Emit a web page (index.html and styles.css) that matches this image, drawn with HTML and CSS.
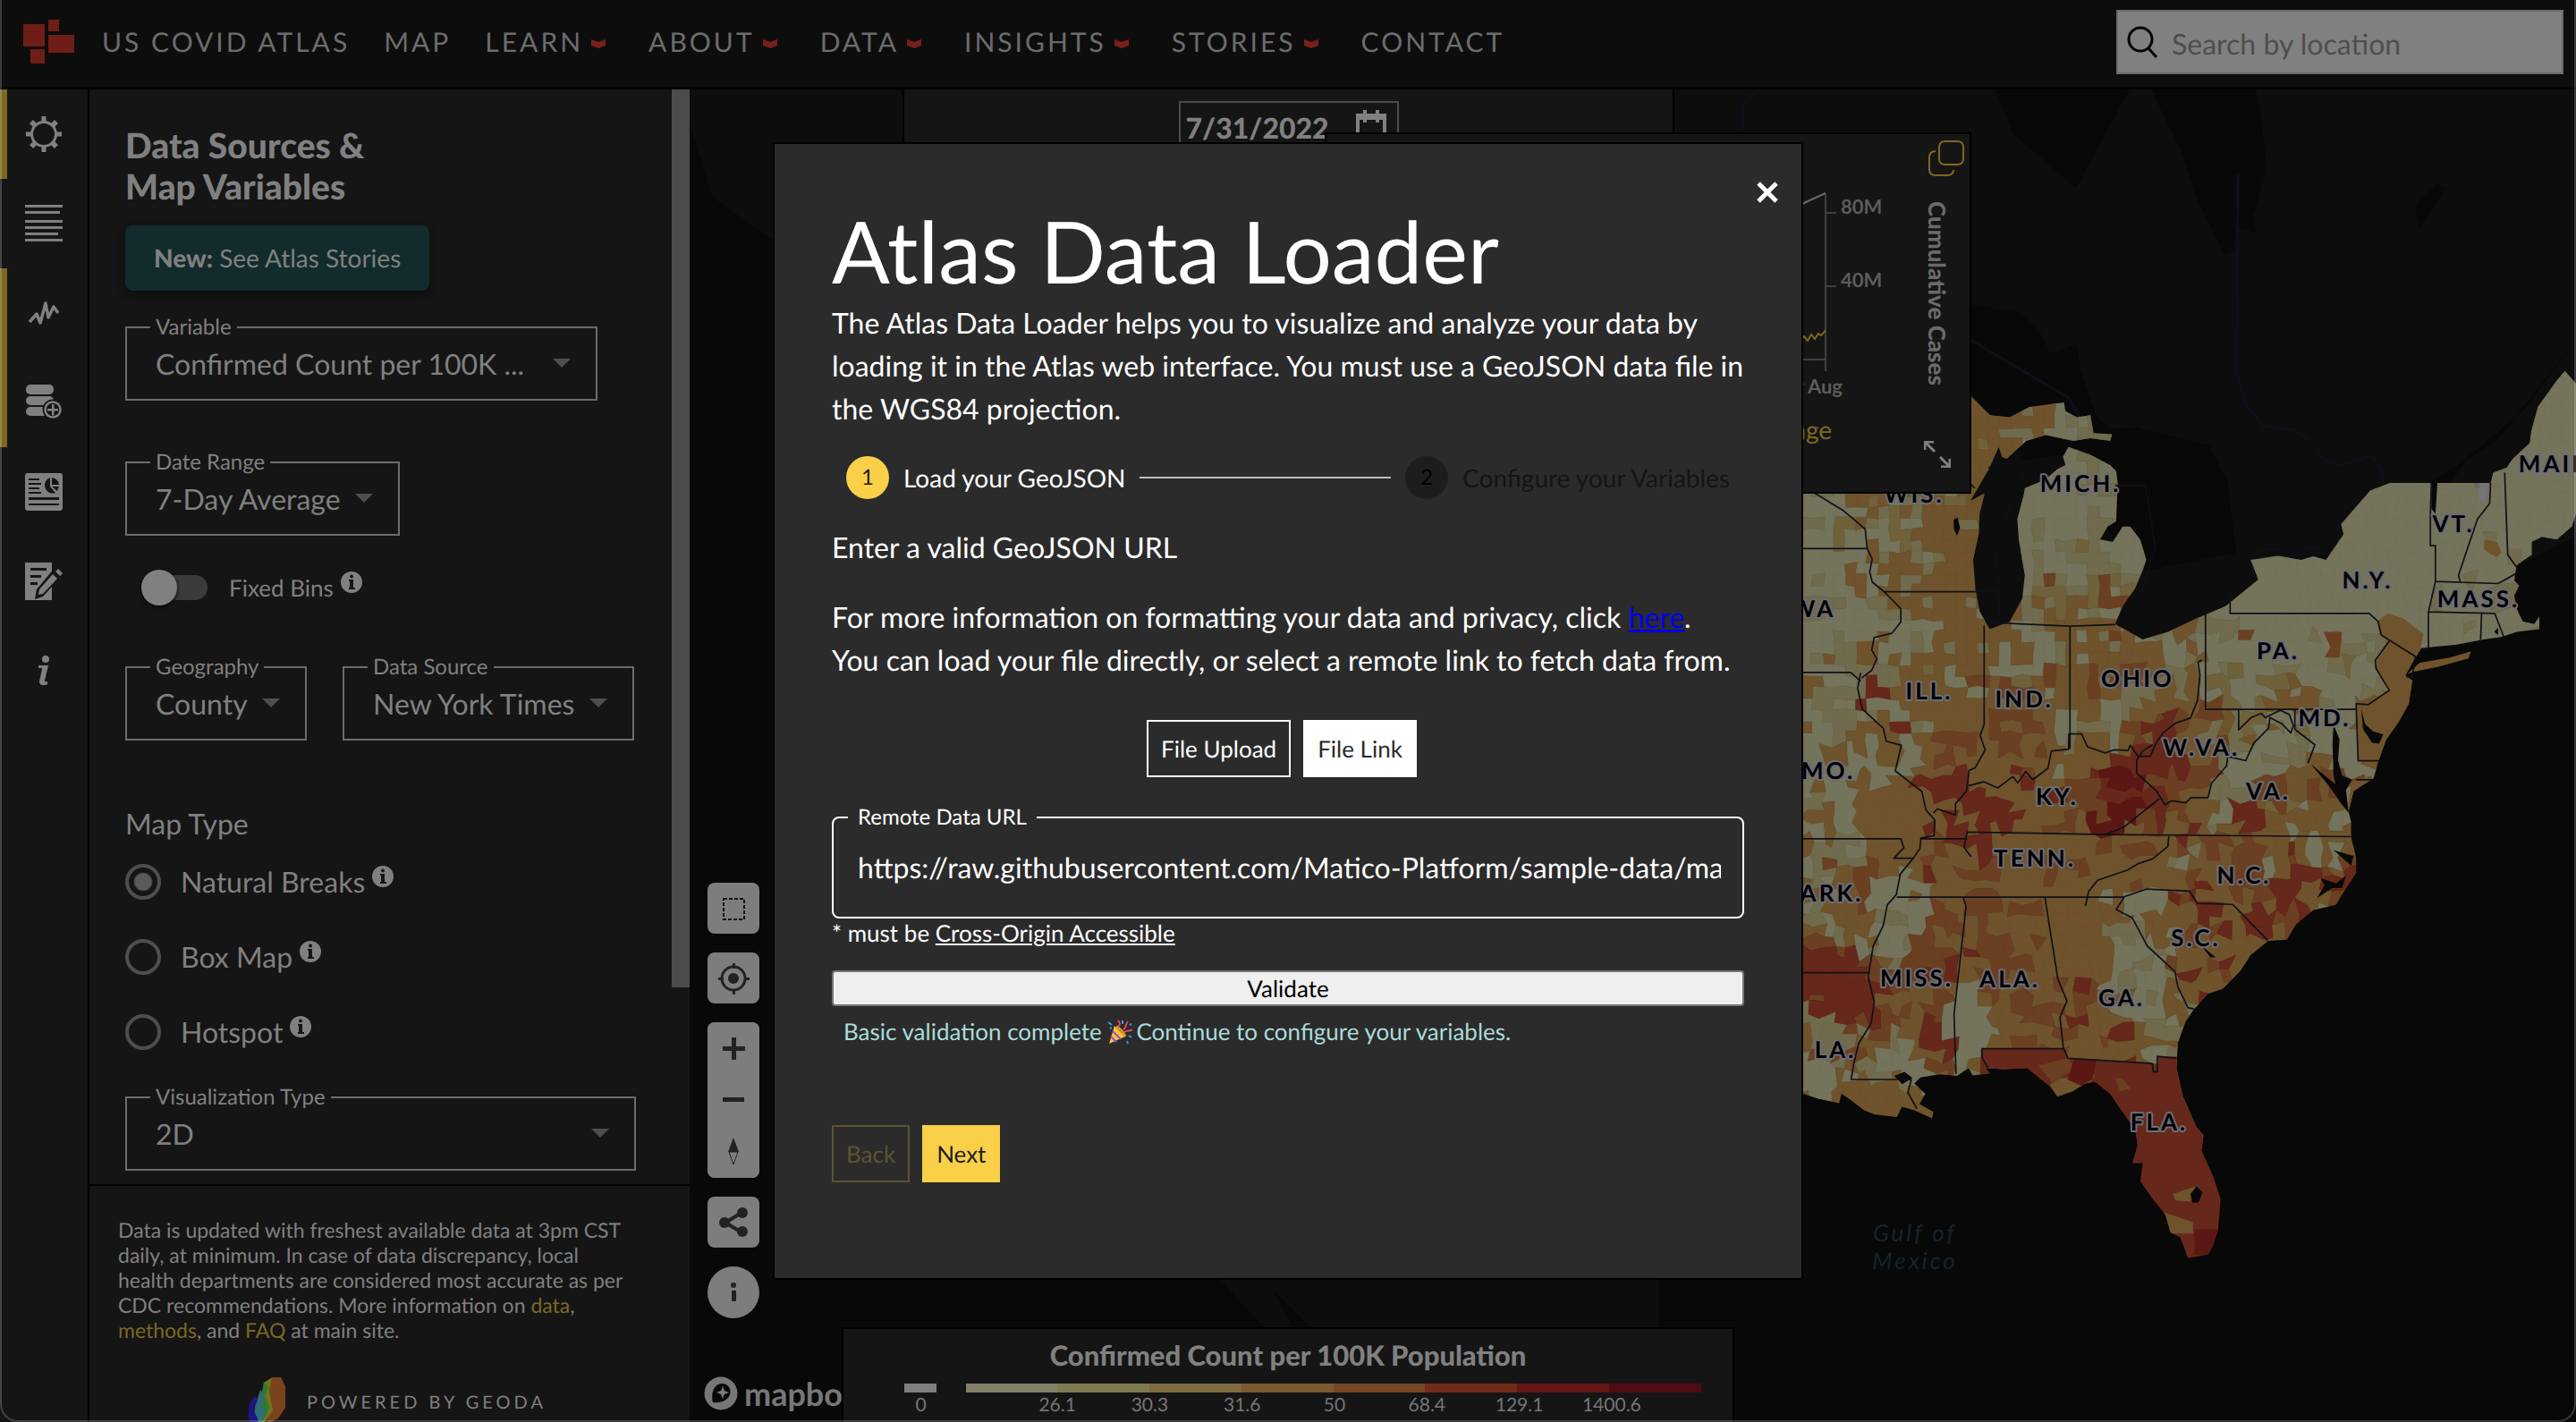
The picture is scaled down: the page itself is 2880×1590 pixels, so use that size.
FILE: index.html
```html
<!DOCTYPE html>
<html lang="en">
<head>
<meta charset="utf-8">
<title>US Covid Atlas</title>
<link rel="stylesheet" href="styles.css">
</head>
<body>
<svg width="0" height="0" class="defs" aria-hidden="true">
  <symbol id="caret" viewBox="0 0 16 10"><path d="M0 0l8 3 8-3v7l-8 3-8-3z"/></symbol>
  <symbol id="info" viewBox="0 0 24 24"><circle cx="12" cy="12" r="12"/><path d="M9 9h5v9h2v2H9v-2h1v-7H9zM12 3.500a2 2 0 1 1 0 4 2 2 0 0 1 0-4z" fill="#151515"/></symbol>
</svg>

<header class="topbar">
  <nav class="nav">
    <a class="brand" href="#">
      <svg class="logo" viewBox="0 0 58 50"><path d="M0 5h24v25H0zM28 0h12v13H28zM28 17h29v20H28zM8 33h16v16H8z"/></svg>
      <span>US COVID ATLAS</span>
    </a>
    <a href="#">MAP</a>
    <button type="button">LEARN<svg class="caret"><use href="#caret"/></svg></button>
    <button type="button">ABOUT<svg class="caret"><use href="#caret"/></svg></button>
    <button type="button">DATA<svg class="caret"><use href="#caret"/></svg></button>
    <button type="button">INSIGHTS<svg class="caret"><use href="#caret"/></svg></button>
    <button type="button">STORIES<svg class="caret"><use href="#caret"/></svg></button>
    <a href="#">CONTACT</a>
  </nav>
  <label class="search">
    <svg viewBox="0 0 36 36"><circle cx="15" cy="15" r="13"/><path d="M24 25l9 10"/></svg>
    <input type="search" placeholder="Search by location" aria-label="Search by location">
  </label>
</header>

<div class="workspace">
  <aside class="rail">
    <button type="button" class="on" aria-label="Settings"><svg viewBox="0 0 42 42"><circle cx="21" cy="21" r="13.500" fill="none" stroke="#808080" stroke-width="3"/><path d="M18.500 1h5v6h-5zM18.500 35h5v6h-5zM1 18.500h6v5H1zM35 18.500h6v5h-6zM5 9l4-4 5 5-4 4zM28 10l5-5 4 4-5 5zM5 33l5-5 4 4-5 5zM28 32l4-4 5 5-4 4z"/></svg></button>
    <button type="button" aria-label="Data table"><svg viewBox="0 0 42 42"><path d="M0 0h42v3H0zM0 7h39v3H0zM0 17h42v3H0zM0 24h42v3H0zM0 31h37v3H0zM0 38h42v3H0z"/></svg></button>
    <button type="button" class="on" aria-label="Chart"><svg viewBox="0 0 42 42"><path d="M5 31l8-9 4 10 6-22 3 16 6-12 5 7" fill="none" stroke="#808080" stroke-width="3.500" stroke-linejoin="round"/></svg></button>
    <button type="button" class="on" aria-label="Add data"><svg viewBox="0 0 42 42"><rect x="1" y="1" width="31" height="11" rx="5"/><rect x="1" y="14" width="31" height="10" rx="5"/><rect x="1" y="26" width="29" height="10" rx="5"/><circle cx="31" cy="29" r="11.500" fill="#151515"/><circle cx="31" cy="29" r="8.500" fill="none" stroke="#808080" stroke-width="2.500"/><path d="M30 23h2.500v5H37v2.500h-4.500v5H30v-5h-5V28h5z"/></svg></button>
    <button type="button" aria-label="Report"><svg viewBox="0 0 42 42"><rect width="42" height="42" rx="3"/><path d="M4 6h12v2H4zM4 11h14v2H4zM4 16h12v2H4zM4 21h14v2H4zM4 27h34v3H4zM4 34h34v2H4zM28 5v10l6 7a9 9 0 1 1-6-17zM30 5a9 9 0 0 1 8 8h-8zM30 15h8l-2 5z" fill="#151515"/></svg></button>
    <button type="button" aria-label="Edit notes"><svg viewBox="0 0 42 42"><path d="M0 0h30v42H0z"/><path d="M6 6h18v3H6zM6 14h12v3H6zM6 22h8v3H6zM33 6l9 8-22 24-9 3 2-11z" fill="#151515"/><path d="M31 13l5 5-16 17-5 1 1-6zM34 10l3-3 5 5-3 3z"/></svg></button>
    <button type="button" aria-label="About"><svg viewBox="0 0 42 42"><circle cx="23" cy="8" r="4"/><path d="M15 15h11l-4 17c0 2 2 1 3 1v3c-4 2-9 2-9-3l3-14c0-2-2-1-4-1z"/></svg></button>
  </aside>

  <section class="panel">
    <div class="panel-scroll">
      <form class="controls">
        <h2>Data Sources &amp;<br>Map Variables</h2>
        <a class="stories" href="#"><b>New:</b> See Atlas Stories</a>
        <fieldset class="field wide"><legend><label for="variable">Variable</label></legend>
          <div class="pick"><select id="variable"><option>Confirmed Count per 100K ...</option></select></div></fieldset>
        <fieldset class="field range"><legend><label for="range">Date Range</label></legend>
          <div class="pick"><select id="range"><option>7-Day Average</option></select></div></fieldset>
        <label class="toggle"><input type="checkbox"><span>Fixed Bins</span><svg class="info"><use href="#info"/></svg></label>
        <div class="pair">
          <fieldset class="field"><legend><label for="geo">Geography</label></legend>
            <div class="pick"><select id="geo"><option>County</option></select></div></fieldset>
          <fieldset class="field"><legend><label for="source">Data Source</label></legend>
            <div class="pick"><select id="source"><option>New York Times</option></select></div></fieldset>
        </div>
        <h3>Map Type</h3>
        <div class="radios">
          <label><input type="radio" name="type" checked><span>Natural Breaks</span><svg class="info"><use href="#info"/></svg></label>
          <label><input type="radio" name="type"><span>Box Map</span><svg class="info"><use href="#info"/></svg></label>
          <label><input type="radio" name="type"><span>Hotspot</span><svg class="info"><use href="#info"/></svg></label>
        </div>
        <fieldset class="field full"><legend><label for="viz">Visualization Type</label></legend>
          <div class="pick"><select id="viz"><option>2D</option></select></div></fieldset>
      </form>
      <div class="scrollbar"></div>
    </div>
    <footer class="note">
      <p>Data is updated with freshest available data at 3pm CST daily, at minimum. In case of data discrepancy, local health departments are considered most accurate as per CDC recommendations. More information on <a href="#">data</a>, <a href="#">methods</a>, and <a href="#">FAQ</a> at main site.</p>
      <div class="powered">
        <svg viewBox="0 0 42 56"><path d="M18 6l9-6h10l5 10v24l-8 12-12 6z" fill="#7a431c"/><path d="M18 6l9-5-3 14 2 12 2 10-8 12-8 4 2-16z" fill="#6f7420"/><path d="M18 6l5 4-4 12 5 12-9 18-7 2z" fill="#2f7a30"/><path d="M14 14l4 6-2 12 4 8-8 14-6 1 2-22z" fill="#2f6d78"/><path d="M8 20l3 6-5 10 5 10 2 10H6L0 44l2-14z" fill="#1d1580"/></svg>
        <span>POWERED BY GEODA</span>
      </div>
    </footer>
  </section>

  <main class="map">
    <svg class="canvas" viewBox="771 100 2109 1490" preserveAspectRatio="xMidYMid slice">
      <path class="land" d="M771 100h1460l20 50 70 60 60-110h499v500l-600 300H1800V550H771z"/>
      <path class="water" d="M2405 100l22 45 10 20 20 60 30 60 10-5 5-25 20 5-3-20 15-50-6-60-6-30zM771 140l25 80 70 50v300h-95zM2200 340l60 10 20 20 12 25 30-10 4 30 18 50 20 20-40 20-60 10-64-80zM2330 480l60-2 80 20 20 40 10 80-100 20-60-60z"/>
      <path class="land" d="M1363 1430l50 54h33l-30-54zM1410 1430l55 54h92l-40-54zM1517 1430h338v54h-298z"/>
      <path class="lakeline" d="M1948 145v-28l18-17M2203 380l110 65 12 22M2502 195l-2 220 10 35 20 26 35 5 22 15 10 17 20 8 35-12 15 25"/>
      <path class="water" d="M2880 380l-60 80-60 50-20 30-50 15 100-60zM2700 230l25-25 10 5-30 45z"/>
      <g transform="translate(2000 540) scale(.5612 .574)">
        <clipPath id="coast"><path d="M0 1185L28 1190 60 1200 100 1208 105 1190 120 1200 150 1222 170 1230 215 1235 225 1215 250 1222 285 1238 288 1225 260 1210 272 1190 250 1170 262 1158 300 1152 335 1155 358 1140 366 1154 400 1150 390 1140 430 1142 475 1140 500 1160 520 1175 535 1195 565 1185 590 1170 610 1166 640 1190 665 1225 690 1260 695 1290 684 1325 705 1325 700 1360 725 1395 750 1425 760 1460 780 1470 795 1510 835 1503 845 1485 855 1455 860 1395 845 1350 822 1300 826 1270 812 1255 785 1195 772 1140 775 1090 790 1050 805 1028 835 995 865 985 900 950 920 920 955 892 992 890 1010 860 1045 832 1090 822 1100 805 1130 760 1130 730 1120 690 1120 660 1115 640 1125 600 1165 575 1175 540 1190 500 1215 465 1235 430 1242 385 1228 375 1248 340 1260 322 1275 320 1330 315 1385 305 1420 300 1450 290 1495 285 1495 260 1485 275 1462 270 1450 245 1445 220 1455 200 1445 190 1450 160 1480 140 1480 115 1500 105 1530 110 1560 85 1568 60V-194L1546-218 1530-200 1492-148 1479-101 1476-78 1442-47 1430-30 1403-20 1398 0H1197L1158 15 1100 80 1105 100 1070 150 1045 143 1020 150 975 142 920 150 935 188 870 240 810 265 755 290 705 305 650 275 665 240 690 205 705 170 712 150 700 110 680 85 665 85 645 115 620 110 635 85 652 75 655 0 652-23 640-35 601-55 557-70 546-51 551-35 535-27 512-8 495 0 470 10 468 23 455 70 458 110 470 180 465 225 440 270 400 285 380 250 372 210 367 150 378 100 380 60 390 20 362 35 400-30 418-70 425-50 434-47 473-82 512-93 566-82 601-87 640-82 644-95 607-97 601-132 574-128 551-140 548-157 479-148 440-128 401-132 362-170 0-170z"/></clipPath>
        <g clip-path="url(#coast)">
          <g id="counties"></g>
          <path fill="#6e532c" d="M1130 432l66-26-30-50 30-48 50 30-10 150-60 52h-42z"/>
          <path fill="#6e532c" d="M1172 270l22-16 30 10 40 30-10 50-50-30-28-20z"/>
          <path fill="#6e532c" d="M1385 110l25 5 10 20-10 10-25-15zM1112 640l10-60 40-10-20 60z"/>
          <path fill="#66281b" d="M383 1103h165l8 18 168 10h12v-14h40l150 400H640V1200l-80-10-180-30z"/>
          <path fill="#6e532c" d="M520 1172l20-12 70-6-20 30-50 20zM765 1385l45-15-10 30-30-2zM745 1420l60 20v22l-50 0z"/>
          <path fill="#6b4022" d="M497 1135l60-15 12 22-45 26zM650 1160l15 0 15 20-20 5z"/>
          <path fill="#5a1714" d="M568 1122h45l-8 40-22 12-28-12zM808 1454h50v50h-50z"/>
          <path fill="#6b4022" d="M895 286h33l-8 20h-25zM1065 290h37l-5 50-30 0 12-20z"/>
          <path fill="#74748a" d="M1375 0h20l-8 42-14-10z" opacity=".6"/>
        </g>
        <path fill="#6e532c" d="M1232 372l25-22 60-10 42-12-5 14-60 16-50 10z"/>
        <path class="water" d="M1085 470l12 30-3 40 8 30 20 8-12 20 5 45-20-25-10-50-2-60zM1140 440l8 30 16 14 20 6-8 18-14-2-18-26zM1060 770l30 10 20-15-8 24-20 0-30 20 15-25zM1085 715l40 12-5 18zM1040 548l50 40 6 30-22-30zM800 1385l12-15 12 12-8 20-12 0zM328 72l8-5 5 20-6 16-6-12zM210 1155l20-8 16 12-20 12zM1280 0h12l-4 60-8-10zM1405 290l8-8v14zM820 900l30 24-10 0z"/>
        <g class="borders">
          <path d="M28 128h128M52 20l58 35 42 35 4 38 10 20-5 25 5 20 25 20 32 32v26l-18 22-35 8-5 24 10 18-10 22-20 15M28 369h95l20 17M143 370l-6 30 9 40 42 38 6 25 30 8-12 50 53 40 8 36 18 20-2 30-26 5-2 20-14 20-25 30-8 40-18 20-8 40-20 40-10 60 12 50-6 40-25 40-10 40-5 30h120l-7 25 18 32M28 693h195l6 18-20 20h40M262 693h93M190 212h230M389 278v192l-8 22 10 28-20 35-12 5-5 40-22 25v22l-36-12-8 8M358 590l30-8 28 12 30-22 10 12 16-22 14 16 30-22 7-34 34-3 1-30h25l12 25 35 12 18-6 28 1 4-10 16 22 24-1 10-22 14-22 26-20 30-10 14-34 5-50-4-25 8-4M560 280v238M400 272l160 7 90-3M830 228v213h300M879 212v42h277l18 16 6 26 68 42-6 40-12 0M1196 308l-28 38 2 16 26 42-42 28-24-2 4 111h40M896 441v40l25-24 20-8 8 8 30-14 18 8 8 22-5 14-18-18-24-12-2 20-30 30-16 34-36-8-2 18-30 34-7 28-34 0-10 10-28-4-14 8-16-26-40-36v-25l12-18 20-12M1008 440l0 40 40 30-14 36M738 615l-70 55-38 15M355 680l275 5 490 4M757 688l-2 20-30 24-30 10-20 12-60 20-18 22-6 28M215 807h450l48-16 85 4 16 24 70 2 70 70M668 807l-16 24 32 16 30 55 55 50 6 30 20 40 15 4M347 807l6 18-24 210 4 116M510 807l26 160 18 42-14 32 7 61H385v18l12 20M548 1102l8 19 168 10 2 16h8v-30l38 4M28 954h134M355 680l-6 30 14 18M1130 578h35M1280 0l-2 60v62h10v70l-14 60v70l-16 5M1288 192l125 4 40-22M1274 251l132 3 12 30 6 16M1380 254l-2 52M1398 0l-2 40-24 30-14 40-24 70 4 14M1426-20l6 160 22 30"/>
        </g>
        <path class="lakeline" d="M398-30l40-10 30 20-25 50-30 110 8 130M650 5l60 0 20 120-40 130 20 25 80-50 70-10 70-40-20-35 30-15 130-3 30-50M330-50v20l40 40"/>
      </g>
      <g class="states">
        <text x="2140" y="562">WIS.</text><text x="2326" y="550">MICH.</text><text x="2010" y="690">IOWA</text>
        <text x="2157" y="782">ILL.</text><text x="2263" y="791">IND.</text><text x="2390" y="768">OHIO</text>
        <text x="2547" y="737">PA.</text><text x="2647" y="658">N.Y.</text><text x="2743" y="595">VT.</text>
        <text x="2771" y="679">MASS.</text><text x="2866" y="528">MAINE</text><text x="2599" y="812">MD.</text>
        <text x="2461" y="845">W.VA.</text><text x="2536" y="894">VA.</text><text x="2300" y="900">KY.</text>
        <text x="2044" y="871">MO.</text><text x="2275" y="969">TENN.</text><text x="2509" y="988">N.C.</text>
        <text x="2048" y="1008">ARK.</text><text x="2455" y="1058">S.C.</text><text x="2143" y="1103">MISS.</text>
        <text x="2247" y="1104">ALA.</text><text x="2372" y="1125">GA.</text><text x="2052" y="1183">LA.</text>
        <text x="2414" y="1264">FLA.</text>
      </g>
      <g class="gulf"><text x="2141" y="1388">Gulf of</text><text x="2141" y="1419">Mexico</text></g>
    </svg>

    <div class="datebar"><div class="date"><span>7/31/2022</span><svg viewBox="0 0 34 40"><path d="M2 6h30v32H2z" fill="none" stroke="#808080" stroke-width="4"/><path d="M2 5h30v6H2z"/><path d="M8 0h4v14H8zM22 0h4v14h-4z"/></svg></div></div>

    <div class="chart">
      <svg class="plot" viewBox="0 0 120 340"><path d="M42 29v198M0 214h42M42 50h12M42 132h12" stroke="#404040" stroke-width="2" fill="none"/><path d="M0 48l20-10 22-10" stroke="#6a6a6a" stroke-width="2" fill="none"/><path d="M0 188l10-2 4 6 4-4 4 5 4-7 4 5 4-6 3 2 3-3 2-3" stroke="#7d6820" stroke-width="2" fill="none"/>
        <text x="59" y="51" class="tick">80M</text><text x="59" y="133" class="tick">40M</text><text x="61" y="252" text-anchor="end" class="tick">May Aug</text></svg>
      <span class="average">7-Day Average</span>
      <div class="chart-side">
        <button type="button" aria-label="Pop out"><svg viewBox="0 0 40 40"><rect x="12" y="1" width="27" height="26" rx="6"/><path d="M8 12c-5 0-7 2-7 7v13c0 5 2 7 7 7h13c5 0 7-2 7-6"/></svg></button>
        <span class="axis">Cumulative Cases</span>
        <svg class="expand" viewBox="0 0 30 30"><path d="M1 10V1h10M1 1l11 11M29 20v9H19M29 29L18 18"/></svg>
      </div>
    </div>

    <div class="tools">
      <button type="button" aria-label="Select area"><svg viewBox="0 0 58 58"><path d="M18 18h23v23H18z" fill="none" stroke="#111" stroke-width="2" stroke-dasharray="4 2"/></svg></button>
      <button type="button" aria-label="Locate"><svg viewBox="0 0 58 58"><circle cx="29" cy="29" r="13" fill="none" stroke="#222" stroke-width="3"/><circle cx="29" cy="29" r="6"/><path d="M28 12h3v6h-3zM28 41h3v6h-3zM12 28h6v3h-6zM41 28h6v3h-6z"/></svg></button>
      <div class="zoom">
        <button type="button" aria-label="Zoom in"><svg viewBox="0 0 58 58"><path d="M27 17h5v10h10v5H32v10h-5V32H17v-5h10z"/></svg></button>
        <button type="button" aria-label="Zoom out"><svg viewBox="0 0 58 58"><path d="M17 26h24v5H17z"/></svg></button>
        <button type="button" aria-label="Reset north"><svg viewBox="0 0 58 58"><path d="M29 13l6 16H23z"/><path d="M24 29h10l-5 14z" fill="none" stroke="#222"/></svg></button>
      </div>
      <button type="button" aria-label="Share"><svg viewBox="0 0 58 58"><path d="M38 18L20 29l18 11" fill="none" stroke="#222" stroke-width="4"/><circle cx="39" cy="18" r="6"/><circle cx="19" cy="29" r="6"/><circle cx="39" cy="39" r="6"/></svg></button>
      <button type="button" class="round" aria-label="Information"><svg viewBox="0 0 58 58"><circle cx="29" cy="21" r="3"/><path d="M27 27h5v12h-5z"/></svg></button>
    </div>

    <div class="mapbox"><svg viewBox="0 0 38 38"><circle cx="19" cy="19" r="18.500" fill="#777"/><path d="M10 29c-2-9 0-20 10-21 7 0 11 6 9 12-2 7-10 10-19 9z" fill="#080808"/><path d="M21 11l2 5 5 2-5 2-2 5-2-5-5-2 5-2z" fill="#777"/></svg><span>mapbox</span></div>

    <div class="legend">
      <h3>Confirmed Count per 100K Population</h3>
      <div class="scale"><i class="zero"></i><div class="ramp"><i></i><i></i><i></i><i></i><i></i><i></i><i></i><i></i></div></div>
      <div class="ticks"><span class="zero">0</span><div class="steps"><span>26.1</span><span>30.3</span><span>31.6</span><span>50</span><span>68.4</span><span>129.1</span><span>1400.6</span></div></div>
    </div>
  </main>
</div>

<div class="overlay">
  <section class="modal" role="dialog" aria-labelledby="loader-title">
    <button type="button" class="close" aria-label="Close"><svg viewBox="0 0 24 24"><path d="M2 2l20 20M22 2L2 22"/></svg></button>
    <h1 id="loader-title">Atlas Data Loader</h1>
    <p>The Atlas Data Loader helps you to visualize and analyze your data by loading it in the Atlas web interface. You must use a GeoJSON data file in the WGS84 projection.</p>
    <ol class="stepper">
      <li class="current"><b>1</b><span>Load your GeoJSON</span></li>
      <li class="rule" role="presentation"></li>
      <li><b>2</b><span>Configure your Variables</span></li>
    </ol>
    <p class="block">Enter a valid GeoJSON URL</p>
    <p class="block">For more information on formatting your data and privacy, click <a class="here" href="#">here</a>.<br>You can load your file directly, or select a remote link to fetch data from.</p>
    <div class="modes"><button type="button" class="btn">File Upload</button><button type="button" class="btn white">File Link</button></div>
    <fieldset class="url"><legend><label for="url">Remote Data URL</label></legend>
      <input id="url" type="text" value="https://raw.githubusercontent.com/Matico-Platform/sample-data/main/sample.geojson"></fieldset>
    <p class="hint">* must be <a href="#">Cross-Origin Accessible</a></p>
    <button type="button" class="validate">Validate</button>
    <p class="status">Basic validation complete <svg viewBox="0 0 28 28"><path d="M8 7l12 12L2 27z" fill="#f8c33c"/><path d="M6 13l9 9M4 19l6 6" stroke="#9a52c8" stroke-width="2"/><path d="M10 8c3 1 9 7 10 11" stroke="#d89a20" stroke-width="3" fill="none"/><path d="M12 8c3-2 2-5 0-7M18 11c3-1 2-5 5-9M19 14c4-3 6 0 9-3" stroke="#e0456b" stroke-width="2" fill="none"/><path d="M1 3l4 3M17 1v4M24 18l3 2M22 24l1 3M25 6l2-1M3 9l2 1" stroke="#4a90e8" stroke-width="2"/></svg>Continue to configure your variables.</p>
    <div class="actions"><button type="button" class="btn yellow-line" disabled>Back</button><button type="button" class="btn yellow">Next</button></div>
  </section>
</div>
<script src="script.js"></script>
</body>
</html>
```
FILE: styles.css
```css
* { box-sizing: border-box; }
body { margin: 0; height: 100vh; display: flex; flex-direction: column; overflow: hidden; background: #080808; color: #808080; font: 32px/48px Lato, "Noto Sans", sans-serif; text-rendering: geometricPrecision; }
body::after { content: ""; position: fixed; inset: 0; border: 2px solid rgba(255, 255, 255, .2); border-top: 0; border-radius: 0 0 20px 20px; pointer-events: none; }
.defs { position: absolute; }
button, input, select { font: inherit; color: inherit; text-rendering: inherit; }
button { background: none; border: 0; padding: 0; }
a { color: inherit; text-decoration: none; }
h1, h2, h3, p, ol { margin: 0; padding: 0; }
fieldset { margin: 0; min-width: 0; }
svg { fill: #808080; flex: none; }

.topbar { flex: none; height: 100px; display: flex; align-items: center; justify-content: space-between; padding: 0 14px 4px 26px; background: #0d0d0d; border-bottom: 2px solid #000; }
.nav { display: flex; align-items: center; gap: 38px; font-size: 30px; letter-spacing: 3px; color: #6c6c6c; }
.nav button { display: flex; align-items: center; gap: 9px; letter-spacing: 3px; padding-right: 10px; }
.brand { display: flex; align-items: center; gap: 30px; }
.logo { width: 58px; height: 50px; fill: #6e1d17; }
.caret { width: 16px; height: 10px; fill: #7a1f19; margin-top: 4px; }
.search { display: flex; align-items: center; gap: 14px; width: 500px; height: 72px; padding: 0 10px; background: #808080; border: 2px solid #6a6a6a; }
.search svg { width: 36px; height: 36px; fill: none; stroke: #000; stroke-width: 3; }
.search input { flex: 1; min-width: 0; background: none; border: 0; padding: 4px 0 0; outline: 0; }
.search input::placeholder { color: #4e4e4e; opacity: 1; }

.workspace { flex: 1; min-height: 0; display: grid; grid-template-columns: 100px 671px minmax(0, 1fr); }
.rail { background: #151515; border-right: 2px solid #000; display: flex; flex-direction: column; }
.rail button { height: 100px; border-left: 8px solid transparent; padding-right: 8px; display: grid; place-items: center; }
.rail .on { border-color: #7d6820; }
.rail svg { width: 42px; height: 42px; }

.panel { background: #151515; display: flex; flex-direction: column; min-height: 0; overflow: hidden; }
.panel-scroll { flex: 1; min-height: 0; display: flex; justify-content: space-between; }
.controls { flex: 1; padding: 40px 40px 0; display: flex; flex-direction: column; align-items: flex-start; }
.scrollbar { width: 20px; height: 82%; background: #4c4c4c; }
.controls h2 { font-size: 39px; line-height: 46px; font-weight: 900; }
.stories { margin: 20px 0 26px; padding: 0 32px; height: 73px; line-height: 73px; font-size: 28px; border-radius: 8px; background: #122b2c; box-shadow: 0 4px 8px #0e0e0e; }
.stories b { font-weight: 900; }
.field { border: 2px solid #6c6c6c; padding: 0 0 15px 26px; }
.field legend { padding: 0 6px; font-size: 24px; line-height: 30px; }
.field label { display: block; }
.wide { width: 528px; }
.full { width: 571px; }
.range { margin: 54px 0 38px; }
.pick { display: grid; align-items: center; padding-right: 28px; }
.pick select { grid-area: 1 / 1; appearance: none; background: none; border: 0; outline: 0; padding: 2px 36px 0 6px; height: 50px; line-height: 48px; }
.pick::after { content: ""; grid-area: 1 / 1; justify-self: end; width: 20px; height: 10px; background: #4e4e4e; clip-path: polygon(0 0, 100% 0, 50% 100%); pointer-events: none; }
.info { width: 24px; height: 24px; }
.toggle { display: flex; align-items: center; height: 40px; margin: 0 0 54px 18px; font-size: 26px; line-height: 36px; }
.toggle input { appearance: none; margin: 0 24px 0 0; width: 74px; height: 28px; border-radius: 14px; background: #3b3b3b; display: flex; align-items: center; }
.toggle input::before { content: ""; width: 40px; height: 40px; flex: none; border-radius: 50%; background: #808080; box-shadow: 0 2px 4px #0a0a0a; }
.toggle .info { margin: 0 0 12px 8px; }
.pair { display: flex; gap: 40px; }
.controls h3 { font-weight: 400; line-height: 40px; margin: 73px 0 25px; font-size: 32px; }
.radios { display: flex; flex-direction: column; gap: 44px; margin-bottom: 38px; }
.radios label { display: flex; align-items: center; height: 40px; }
.radios input { appearance: none; margin: 0 22px 0 0; width: 40px; height: 40px; border: 4px solid #4e4e4e; border-radius: 50%; }
.radios input:checked { background: radial-gradient(#5a5a5a 0 9px, transparent 11px); }
.radios .info { margin: 0 0 12px 8px; }
.note { flex: none; height: 266px; border-top: 2px solid #000; padding: 35px 65px 0 32px; font-size: 23px; line-height: 28px; }
.note a { color: #7d6820; }
.powered { display: flex; align-items: center; gap: 24px; margin: 39px 0 0 145px; font-size: 20px; letter-spacing: 4px; }
.powered svg { width: 42px; height: 56px; }

.map { position: relative; overflow: hidden; background: #080808; }
.canvas { display: block; width: 100%; height: 100%; }
.land { fill: #0d0d0d; }
.water { fill: #080808; }
.lakeline { fill: none; stroke: #0c1018; stroke-width: 3; }
.borders { fill: none; stroke: #0f1118; stroke-width: 3; stroke-linejoin: round; }
.states { font-size: 26px; font-weight: 700; letter-spacing: 3px; text-anchor: middle; fill: #000; stroke: #6d6d78; stroke-width: 4px; paint-order: stroke; stroke-linejoin: round; }
.gulf { font-size: 26px; font-style: italic; letter-spacing: 3px; text-anchor: middle; fill: #14242c; }
.datebar { position: absolute; top: 0; left: 238px; width: 863px; height: 90px; padding-top: 13px; background: #151515; border: 2px solid #000; border-top: 0; display: flex; justify-content: center; }
.date { display: flex; justify-content: space-between; width: 246px; height: 80px; padding: 4px 12px 4px 6px; border: 2px solid #4a4a4a; font-weight: 900; }
.date svg { width: 34px; height: 40px; margin-top: 4px; }
.chart { position: absolute; top: 48px; right: 676px; width: 723px; height: 404px; background: #151515; border: 2px solid #000; display: flex; justify-content: flex-end; }
.plot { width: 120px; height: 340px; margin-top: 38px; overflow: visible; }
.tick { font-size: 22px; font-weight: 700; fill: #5c5c5c; }
.average { position: absolute; right: 154px; bottom: 46px; font-size: 28px; line-height: 48px; color: #7d6820; }
.chart-side { width: 83px; display: flex; flex-direction: column; align-items: flex-start; padding: 7px 0 0 32px; }
.chart-side button { height: 40px; width: 40px; margin-left: 5px; }
.chart-side button svg { display: block; width: 40px; height: 40px; fill: none; stroke: #7d6820; stroke-width: 2; }
.axis { writing-mode: vertical-rl; font-size: 26px; line-height: 30px; font-weight: 900; color: #6a6a6a; height: 268px; margin-top: 28px; }
.expand { width: 30px; height: 30px; fill: none; stroke: #808080; stroke-width: 3; }
.tools { position: absolute; left: 20px; bottom: 116px; width: 58px; display: flex; flex-direction: column; gap: 21px; }
.tools button { display: block; width: 58px; height: 57px; border-radius: 8px; background: #7d7d7d; }
.tools svg { display: block; width: 58px; height: 58px; fill: #222; }
.tools .round { height: 58px; border-radius: 50%; }
.zoom { border-radius: 8px; background: #7d7d7d; overflow: hidden; }
.zoom button { height: 58px; border-radius: 0; }
.mapbox { position: absolute; left: 16px; bottom: 8px; display: flex; align-items: center; gap: 7px; font-size: 36px; font-weight: 700; color: #777; }
.mapbox svg { width: 38px; height: 38px; }
.legend { position: absolute; left: 50%; bottom: 0; transform: translateX(-50%); margin-left: -386px; width: 998px; height: 106px; padding: 9px 35px 0 68px; background: #151515; border: 2px solid #000; border-bottom: 0; }
.legend h3 { font-size: 31px; line-height: 40px; font-weight: 900; text-align: center; margin-right: 32px; margin-bottom: 12px; }
.scale { display: flex; gap: 33px; height: 10px; }
.scale .zero { width: 36px; background: #808080; }
.ramp { flex: 1; display: grid; grid-template-columns: repeat(8, 1fr); }
.ramp i:nth-child(1) { background: #828168; }
.ramp i:nth-child(2) { background: #7f7a52; }
.ramp i:nth-child(3) { background: #7e6c40; }
.ramp i:nth-child(4) { background: #7b5a2f; }
.ramp i:nth-child(5) { background: #764625; }
.ramp i:nth-child(6) { background: #702b1c; }
.ramp i:nth-child(7) { background: #641715; }
.ramp i:nth-child(8) { background: #4e0c13; }
.ticks { display: flex; gap: 82px; font-size: 21px; line-height: 28px; text-align: center; color: #757575; }
.ticks .zero { width: 38px; }
.steps { flex: 1; display: grid; grid-template-columns: repeat(7, 1fr); padding-right: 48px; }

.overlay { position: fixed; inset: 0; display: grid; place-items: center; }
.modal { position: relative; width: 40vw; min-height: 80vh; padding: 64px 64px 40px; background: #2b2b2b; border: 2px solid #000; color: #fff; display: flex; flex-direction: column; }
.close { position: absolute; top: 42px; right: 26px; }
.close svg { display: block; width: 24px; height: 24px; stroke: #fff; stroke-width: 5; }
.modal h1 { font-size: 96px; line-height: 112px; font-weight: 400; }
.stepper { display: flex; align-items: center; gap: 16px; margin-top: 29px; padding: 0 16px; list-style: none; font-size: 28px; color: #151515; }
.stepper li { display: flex; align-items: center; gap: 16px; }
.stepper b { width: 48px; height: 48px; border-radius: 50%; background: #1d1d1d; color: #000; font-size: 24px; font-weight: 400; text-align: center; }
.stepper .current { color: #fff; }
.stepper .current b { background: #f9d048; color: #1d1d1d; }
.stepper .rule { flex: 1; height: 2px; background: #bdbdbd; }
.block { margin-top: 30px; }
.here { color: #0000ee; text-decoration: underline; }
.modes, .actions { display: flex; gap: 14px; }
.modes { justify-content: center; margin: 43px 14px 30px 0; }
.btn { height: 64px; padding: 0 14px; border: 2px solid #fff; font-size: 26px; }
.white { background: #fff; color: #2b2b2b; }
.yellow { background: #f9d048; border-color: #f9d048; color: #1d1d1d; }
.yellow-line { border-color: #5c5330; color: #5c5330; }
.url { border: 2px solid #fff; border-radius: 8px; padding: 8px 24px 24px 16px; }
.url legend { padding: 0 11px; font-size: 24px; line-height: 30px; }
.url label { display: block; }
.url input { display: block; width: 100%; background: none; border: 0; outline: 0; padding: 0 0 0 11px; height: 64px; }
.hint { font-size: 26px; line-height: 32px; }
.hint a { text-decoration: underline; }
.validate { height: 40px; margin-top: 26px; background: #efefef; border: 2px solid #767676; border-radius: 4px; color: #000; font-size: 26px; line-height: 32px; }
.status { margin: 12px 0 0 13px; font-size: 26px; line-height: 32px; color: #a9dcd9; }
.status svg { width: 28px; height: 28px; margin-right: 4px; vertical-align: -5px; }
.actions { margin-top: 89px; }
```
FILE: script.js
```js
// Paints the county mosaic: each cell takes a class from its nearest regional mix.
const COLORS = ["#74735b", "#706b4c", "#6f613a", "#6e532c", "#6b4022", "#66281b", "#5a1714"];
const REGIONS = [
  [200, 0, "33331023"], [330, 60, "33333102"], [60, 60, "0000102"], [90, 220, "00000113"], [450, -140, "3301"], [580, -130, "0001"],
  [380, -110, "33332"], [560, 20, "00000001"], [560, 110, "0000112"], [600, 210, "0331240"], [260, 260, "33333310"], [290, 400, "333333102"],
  [220, 400, "333333105"], [350, 400, "33340"], [330, 560, "3334533"], [290, 640, "35535"], [470, 400, "3333420"], [470, 310, "33301"], [460, 500, "3334"],
  [690, 360, "3333341"], [760, 300, "301"], [640, 470, "3333410"], [700, 510, "55534"], [420, 600, "5553"], [530, 530, "33001"],
  [540, 600, "33345553"], [650, 610, "555546"], [790, 580, "5554443"], [850, 480, "333441"], [900, 300, "0000001"], [960, 330, "0000011"],
  [900, 420, "00022"], [1060, 330, "000011"], [1110, 380, "0012"], [1000, 420, "00332"], [1150, 150, "0"], [1000, 200, "0"], [1250, 100, "0"],
  [1350, 60, "000000001"], [1500, -50, "0"], [1350, 220, "0000001"], [1330, 280, "000001"], [1440, 250, "0001"], [960, 600, "332004"],
  [930, 640, "33545"], [1050, 570, "33334"], [1060, 660, "33300"], [870, 600, "000113"], [960, 520, "00013"], [760, 650, "5443"],
  [700, 720, "333344"], [480, 730, "33333344"], [310, 730, "333435"], [70, 420, "0000113"], [80, 550, "00000331"], [80, 660, "0003331"],
  [180, 540, "00333"], [210, 640, "3333"], [80, 800, "3334441003"], [230, 840, "0000013"], [310, 870, "344453"], [260, 1000, "44443353"],
  [290, 1080, "44535"], [210, 1140, "000134"], [430, 920, "3334443"], [450, 1020, "33344"], [350, 1060, "00013"], [500, 1060, "33344"],
  [590, 880, "33333"], [660, 880, "000013"], [700, 1000, "000133"], [600, 1060, "333345"], [740, 1060, "00113"], [670, 1080, "33335"],
  [90, 1000, "5554"], [40, 1150, "00331"], [80, 1080, "003341"], [200, 1200, "3333"], [850, 880, "333453"], [800, 820, "333545"],
  [720, 860, "00013"], [840, 950, "3354"], [900, 740, "333444"], [780, 740, "330134"], [1000, 790, "45553"], [1080, 700, "00344"],
  [1060, 780, "33450"], [1000, 720, "334450"], [1150, 480, "3"], [1110, 500, "0001"], [1050, 470, "0012"]
];
let seed = 1971;
const rnd = () => (seed = (seed * 16807) % 2147483647) / 2147483647;
const STEP = 22, X0 = -20, Y0 = -240, COLS = 74, ROWS = 70;
const pts = [];
for (let r = 0; r <= ROWS; r++) {
  pts.push([]);
  for (let c = 0; c <= COLS; c++) {
    const x = X0 + c * STEP, y = Y0 + r * STEP;
    const j = (x < 680 && y < 500) ? 6 : 17;
    pts[r].push([x + (rnd() - .5) * j, y + (rnd() - .5) * j]);
  }
}
const shapes = COLORS.map(() => "");
const above = [];
for (let r = 0; r < ROWS; r++) {
  let last = 3;
  for (let c = 0; c < COLS; c++) {
    const x = X0 + c * STEP + 10 + (rnd() - .5) * 24, y = Y0 + r * STEP + 10 + (rnd() - .5) * 24;
    let best = REGIONS[0], dist = Infinity;
    for (const g of REGIONS) {
      const d = (g[0] - x) ** 2 + (g[1] - y) ** 2;
      if (d < dist) { dist = d; best = g; }
    }
    let k = +best[2][Math.floor(rnd() * best[2].length)];
    const pull = rnd();
    if (pull < .25 && best[2].includes(last)) k = last;
    else if (pull < .45 && best[2].includes(above[c])) k = above[c];
    last = above[c] = k;
    const q = [pts[r][c], pts[r][c + 1], pts[r + 1][c + 1], pts[r + 1][c]];
    shapes[k] += "M" + q.map(p => p.map(Math.round).join(" ")).join("L") + "z";
  }
}
const layer = document.getElementById("counties");
shapes.forEach((d, i) => {
  const path = document.createElementNS("http://www.w3.org/2000/svg", "path");
  path.setAttribute("d", d);
  path.setAttribute("fill", COLORS[i]);
  path.setAttribute("stroke", COLORS[i]);
  layer.appendChild(path);
});
```
